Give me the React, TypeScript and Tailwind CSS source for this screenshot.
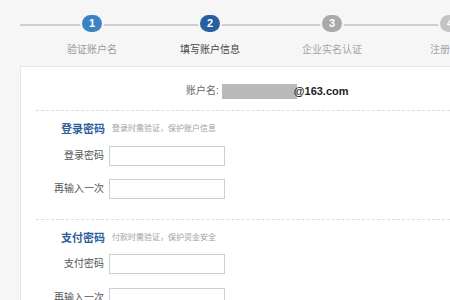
const font = { fontFamily: '"Liberation Sans", "Noto Sans CJK SC", sans-serif' };

interface StepProps {
  n: number;
  label: string;
  circle: string;
  text: string;
}

function Step(props: StepProps) {
  return (
    <div className="relative flex h-[20px] w-[20px] shrink-0 flex-col items-center">
      <div
        className={`flex h-[20px] w-[20px] items-center justify-center rounded-full text-[11px] font-bold text-white ring-2 ring-[#f6f6f6] ${props.circle}`}
      >
        {props.n}
      </div>
      <span className={`mt-[12px] whitespace-nowrap text-[10px] leading-[12px] ${props.text}`}>
        {props.label}
      </span>
    </div>
  );
}

function Line({ w }: { w: string }) {
  return <div className={`h-[2px] shrink-0 bg-[#cfcfcf] ${w}`} />;
}

function Field({ label, top }: { label: string; top: string }) {
  return (
    <div className={`flex items-center gap-[5px] ${top}`}>
      <span className="w-[83px] text-right text-[10px] leading-[20px] text-[#555]">{label}</span>
      <div className="h-[20px] w-[116px] border border-[#cfcfcf] bg-white" />
    </div>
  );
}

function Section({ title, hint, top }: { title: string; hint: string; top: string }) {
  return (
    <div className={`ml-[40px] flex h-[16px] items-center gap-[7px] ${top}`}>
      <span className="text-[11px] font-bold leading-[16px] text-[#2d5d9b]">{title}</span>
      <span className="text-[8px] leading-[16px] text-[#a0a0a0]">{hint}</span>
    </div>
  );
}

export default function App() {
  return (
    <div className="h-[300px] w-[450px] overflow-hidden bg-[#f6f6f6]" style={font}>
      <div className="h-[66px] pt-[15px]">
        <div className="flex items-start">
          <div className="flex h-[20px] items-center">
            <div className="w-[20px] shrink-0" />
            <Line w="w-[62px]" />
          </div>
          <Step n={1} label="验证账户名" circle="bg-[#3d83c4]" text="text-[#9a9a9a]" />
          <div className="flex h-[20px] items-center">
            <Line w="w-[98px]" />
          </div>
          <Step n={2} label="填写账户信息" circle="bg-[#27609f]" text="text-[#444]" />
          <div className="flex h-[20px] items-center">
            <Line w="w-[102px]" />
          </div>
          <Step n={3} label="企业实名认证" circle="bg-[#a9a9a9]" text="text-[#a5a5a5]" />
          <div className="flex h-[20px] items-center">
            <Line w="w-[98px]" />
          </div>
          <Step n={4} label="注册成功" circle="bg-[#c4c4c4]" text="text-[#a5a5a5]" />
        </div>
      </div>

      <div className="ml-[20px] h-[240px] border-l border-t border-[#e6e6e6] bg-white pt-[16px]">
        <div className="ml-[165px] flex h-[16px] items-center">
          <span className="text-[10px] leading-[16px] text-[#666]">账户名:</span>
          <div className="ml-[3px] h-[15px] w-[75px] bg-[#b9b9b9]" />
          <span className="-ml-[3px] text-[11px] font-bold leading-[16px] text-[#222]">@163.com</span>
        </div>
        <div className="ml-[15px] mt-[11px] border-t border-dashed border-[#dcdcdc]" />

        <Section title="登录密码" hint="登录时需验证，保护账户信息" top="mt-[10px]" />
        <Field label="登录密码" top="mt-[9px]" />
        <Field label="再输入一次" top="mt-[13px]" />
        <div className="ml-[15px] mt-[20px] border-t border-dashed border-[#dcdcdc]" />

        <Section title="支付密码" hint="付款时需验证，保护资金安全" top="mt-[10px]" />
        <Field label="支付密码" top="mt-[8px]" />
        <Field label="再输入一次" top="mt-[14px]" />
      </div>
    </div>
  );
}
